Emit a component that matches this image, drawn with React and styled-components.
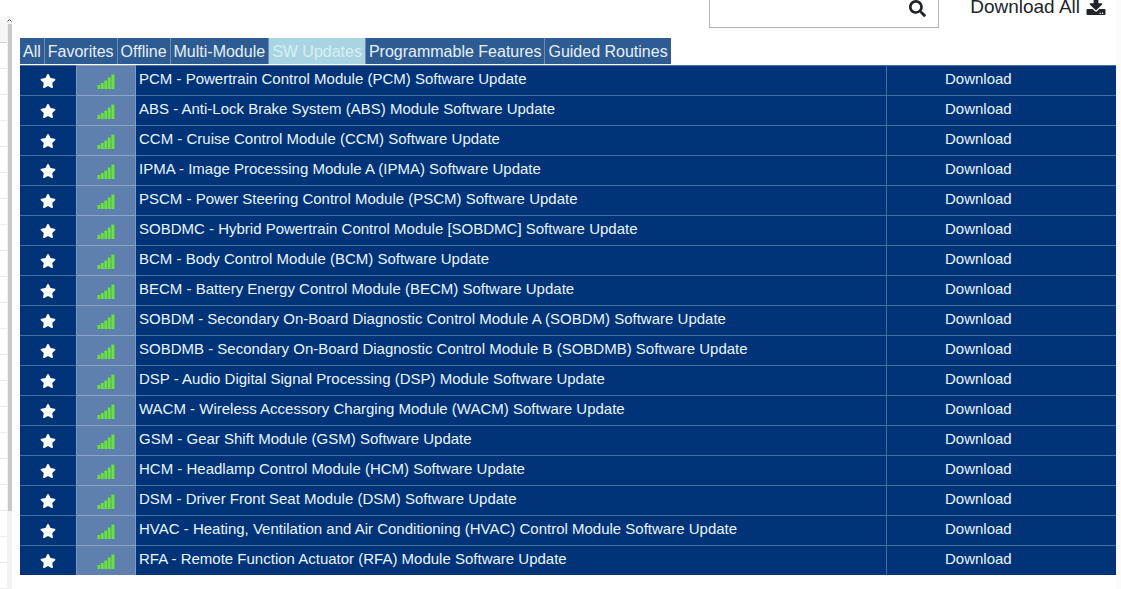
import React, { useState } from 'react'
import styled, { createGlobalStyle } from 'styled-components'
import { FaSearch, FaStar, FaDownload } from 'react-icons/fa'

const GlobalStyle = createGlobalStyle`
  * {
    box-sizing: border-box;
  }
  body {
    margin: 0;
    background: #fff;
    font-family: "Liberation Sans", Arial, sans-serif;
  }
`
const Button = styled.button`
  border: 0;
  padding: 0;
  background: none;
  font: inherit;
  color: inherit;
  cursor: pointer;
`
const Page = styled.div`
  display: flex;
  height: 100vh;
  overflow: hidden;
`
const SideList = styled.div`
  width: 7px;
  padding-top: 17px;
  background: #fff;
`
const SideRow = styled.div`
  height: 26px;
  background: ${({ $head }) => ($head ? '#f7f7f7' : '#fff')};
  border-bottom: 1px solid ${({ $head }) => ($head ? '#cfcfcf' : '#eaeaea')};
`
const Scrollbar = styled.div`
  display: flex;
  flex-direction: column;
  align-items: center;
  width: 5px;
  margin: 16px 8px 0 0;
  background: #f1f1f1;
`
const ScrollArrow = styled.svg`
  width: 5px;
  height: 8px;
  flex-shrink: 0;
`
const ScrollThumb = styled.div`
  width: 4px;
  height: 85%;
  background: #c8c8c8;
`
const Main = styled.main`
  flex: 1;
  min-width: 0;
`
const Edge = styled.div`
  width: 5px;
  background: #fafafa;
`
const Toolbar = styled.header`
  display: flex;
  justify-content: flex-end;
  height: 38px;
  padding-right: 10px;
  color: #212529;
`
const SearchBox = styled.div`
  display: flex;
  align-items: flex-start;
  width: 230px;
  height: 28px;
  margin-right: 31px;
  padding-right: 12px;
  border: 1px solid #b0b3b6;
  border-top: 0;
`
const SearchInput = styled.input`
  flex: 1;
  min-width: 0;
  height: 24px;
  padding: 0 8px;
  border: 0;
  outline: 0;
  background: none;
  font: inherit;
`
const SearchButton = styled(Button)`
  height: 15px;
  font-size: 17px;
  line-height: 10px;
`
const DownloadAll = styled(Button)`
  display: flex;
  align-items: flex-start;
  gap: 6px;
  height: 16px;
  font-size: 19px;
  line-height: 14px;
  white-space: nowrap;

  svg {
    flex-shrink: 0;
    width: 20px;
    margin-top: -4px;
  }
`
const Tabs = styled.nav`
  display: flex;
  height: 27px;
  padding-bottom: 1px;
`
const Tab = styled(Button)`
  padding: 1px 3px 0;
  border-right: 1px solid #6d8db5;
  background: ${({ $active }) => ($active ? '#a9d5e2' : '#2f5b93')};
  color: ${({ $active }) => ($active ? '#d6eff4' : '#e6f1fa')};
  font-size: 16px;
  white-space: nowrap;

  &:last-child {
    border-right: 0;
  }
`
const Table = styled.table`
  width: 100%;
  table-layout: fixed;
  border-spacing: 0;
  background: #003378;
  color: #eaf6fd;
  font-size: 15px;
`
const Cell = styled.td`
  height: 30px;
  padding: 0 3px 5px;
  border-top: 1px solid #456f9f;
  white-space: nowrap;
`
const IconCell = styled(Cell)`
  width: ${({ $width }) => $width};
  padding: 1px 0 0;
  border-right: 1px solid #7e9bc0;
  border-top-color: ${({ $light }) => ($light ? '#8ba5c6' : '#456f9f')};
  background: ${({ $light }) => ($light ? '#5f80ae' : 'transparent')};
  text-align: center;
  line-height: 0;
`
const ActionCell = styled(Cell)`
  width: 230px;
  padding-left: 58px;
  border-left: 1px solid #456f9f;
`
const Bars = styled.svg`
  width: 18px;
  height: 15px;
  fill: #67e33a;
`

const tabs = [
  'All',
  'Favorites',
  'Offline',
  'Multi-Module',
  'SW Updates',
  'Programmable Features',
  'Guided Routines',
]

const updates = [
  'PCM - Powertrain Control Module (PCM) Software Update',
  'ABS - Anti-Lock Brake System (ABS) Module Software Update',
  'CCM - Cruise Control Module (CCM) Software Update',
  'IPMA - Image Processing Module A (IPMA) Software Update',
  'PSCM - Power Steering Control Module (PSCM) Software Update',
  'SOBDMC - Hybrid Powertrain Control Module [SOBDMC] Software Update',
  'BCM - Body Control Module (BCM) Software Update',
  'BECM - Battery Energy Control Module (BECM) Software Update',
  'SOBDM - Secondary On-Board Diagnostic Control Module A (SOBDM) Software Update',
  'SOBDMB - Secondary On-Board Diagnostic Control Module B (SOBDMB) Software Update',
  'DSP - Audio Digital Signal Processing (DSP) Module Software Update',
  'WACM - Wireless Accessory Charging Module (WACM) Software Update',
  'GSM - Gear Shift Module (GSM) Software Update',
  'HCM - Headlamp Control Module (HCM) Software Update',
  'DSM - Driver Front Seat Module (DSM) Software Update',
  'HVAC - Heating, Ventilation and Air Conditioning (HVAC) Control Module Software Update',
  'RFA - Remote Function Actuator (RFA) Module Software Update',
]

const SignalBars = () => (
  <Bars viewBox="0 0 18 15" role="img" aria-label="Signal">
    <rect x="0.5" y="11" width="2.8" height="4" />
    <rect x="3.9" y="9" width="2.8" height="6" />
    <rect x="7.3" y="6.5" width="2.9" height="8.5" />
    <rect x="10.8" y="3.5" width="2.9" height="11.5" />
    <rect x="14.4" y="0.5" width="3" height="14.5" />
  </Bars>
)

const UpdateRow = ({ name }) => (
  <tr>
    <IconCell $width="57px">
      <Button type="button" aria-label={'Favorite ' + name}>
        <FaStar size={16} color="#fff" />
      </Button>
    </IconCell>
    <IconCell $width="59px" $light>
      <SignalBars />
    </IconCell>
    <Cell>{name}</Cell>
    <ActionCell>
      <Button type="button">Download</Button>
    </ActionCell>
  </tr>
)

const App = () => {
  const [active, setActive] = useState('SW Updates')

  return (
    <Page>
      <GlobalStyle />
      <SideList>
        <SideRow $head />
        {Array.from({ length: 21 }, (_, i) => <SideRow key={i} />)}
      </SideList>
      <Scrollbar>
        <ScrollArrow viewBox="0 0 5 8">
          <path d="M0.5 5.5 L2.5 3.5 L4.5 5.5" fill="none" stroke="#555" />
        </ScrollArrow>
        <ScrollThumb />
      </Scrollbar>
      <Main>
        <Toolbar>
          <SearchBox>
            <SearchInput type="text" aria-label="Search" />
            <SearchButton type="button" aria-label="Run search">
              <FaSearch />
            </SearchButton>
          </SearchBox>
          <DownloadAll type="button">
            Download All
            <FaDownload />
          </DownloadAll>
        </Toolbar>
        <Tabs>
          {tabs.map(tab => (
            <Tab
              key={tab}
              type="button"
              $active={tab === active}
              onClick={() => setActive(tab)}
            >
              {tab}
            </Tab>
          ))}
        </Tabs>
        <Table>
          <tbody>
            {updates.map(name => <UpdateRow key={name} name={name} />)}
          </tbody>
        </Table>
      </Main>
      <Edge />
    </Page>
  )
}

export default App
